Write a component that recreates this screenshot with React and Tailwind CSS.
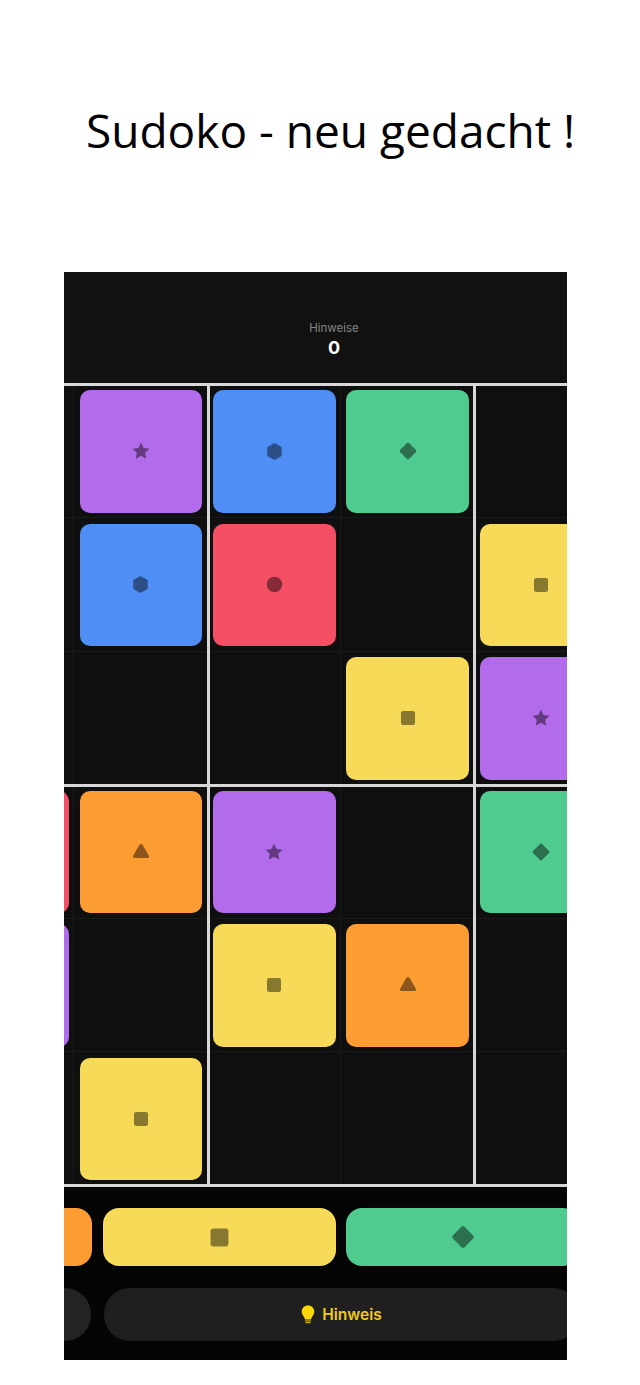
const COLORS = {
  purple: "bg-[#b26bea]",
  blue: "bg-[#4f8ef5]",
  green: "bg-[#4fcb8f]",
  red: "bg-[#f54f66]",
  yellow: "bg-[#f6da58]",
  orange: "bg-[#fc9d33]",
};

const ICON_FOR = {
  purple: "star",
  blue: "hexagon",
  green: "diamond",
  red: "circle",
  yellow: "square",
  orange: "triangle",
};

const ICON_SIZE = { star: 20, hexagon: 19, diamond: 20, circle: 19, square: 18, triangle: 20 };

const BOARD = [
  [null, "purple", "blue", "green", null],
  [null, "blue", "red", null, "yellow"],
  [null, null, null, "yellow", "purple"],
  ["red", "orange", "purple", null, "green"],
  ["purple", null, "yellow", "orange", null],
  [null, "yellow", null, null, null],
];

function Shape({ name, size = 20 }) {
  return (
    <svg width={size} height={size} viewBox="0 0 20 20" fill="#000" fillOpacity="0.45" className="block">
      {name === "star" && (
        <path d="M10 1.6l2.5 5.5 6 .7-4.4 4 1.2 5.9-5.3-3-5.3 3 1.2-5.9-4.4-4 6-.7z" />
      )}
      {name === "hexagon" && (
        <path d="M9 1.6a2 2 0 0 1 2 0l5.600 3.200a2 2 0 0 1 1 1.700v7a2 2 0 0 1-1 1.700L11 18.400a2 2 0 0 1-2 0l-5.600-3.200a2 2 0 0 1-1-1.700v-7a2 2 0 0 1 1-1.700z" />
      )}
      {name === "diamond" && (
        <path d="M8.800 2.200a1.700 1.700 0 0 1 2.400 0l6.600 6.600a1.700 1.700 0 0 1 0 2.400l-6.600 6.600a1.700 1.700 0 0 1-2.400 0l-6.600-6.600a1.700 1.700 0 0 1 0-2.400z" />
      )}
      {name === "circle" && <circle cx="10" cy="10" r="8.200" />}
      {name === "square" && <rect x="2.200" y="2.200" width="15.600" height="15.600" rx="2.500" />}
      {name === "triangle" && (
        <path d="M8.500 2.800a1.800 1.800 0 0 1 3 0l6.400 11a1.500 1.500 0 0 1-1.300 2.300H3.400a1.500 1.500 0 0 1-1.300-2.300z" />
      )}
    </svg>
  );
}

function Bulb() {
  return (
    <svg width="14" height="20" viewBox="0 0 14 20" className="block">
      <path
        d="M7 0.500C3.300 0.500 0.700 3.200 0.700 6.500c0 2.600 1.500 4 2.300 5.400.500.900.800 1.700.900 2.600h6.200c.100-.900.400-1.700.900-2.600.800-1.400 2.300-2.800 2.300-5.400C13.300 3.200 10.700.500 7 .500z"
        fill="#ffd60a"
      />
      <rect x="3.900" y="15.200" width="6.200" height="1.300" rx="0.600" fill="#c9a80c" />
      <rect x="4.300" y="17.100" width="5.400" height="1.200" rx="0.600" fill="#c9a80c" />
    </svg>
  );
}

function Cell({ color }) {
  return (
    <div className="flex items-center justify-center shadow-[inset_-1px_-1px_0_#1a1a1a]">
      {color && (
        <div className={`w-[122.500px] h-[122.500px] rounded-[10px] flex items-center justify-center ${COLORS[color]}`}>
          <Shape name={ICON_FOR[color]} size={ICON_SIZE[ICON_FOR[color]]} />
        </div>
      )}
    </div>
  );
}

export default function App() {
  return (
    <div className="bg-white h-[1385px] w-[640px] overflow-hidden">
      <div className="h-[272px] pl-[86px] pt-[98px]">
        <h1 className="text-[46px] leading-[64px] text-black whitespace-nowrap font-['Open_Sans',sans-serif]">
          Sudoko - neu gedacht !
        </h1>
      </div>

      <div className="ml-16 w-[503px] h-[1088px] overflow-hidden bg-[#050505] font-['Inter',sans-serif]">
        <div className="h-[112.500px] w-[540px] bg-[#111111] flex flex-col items-center justify-end pb-[23.500px]">
          <span className="text-[11.500px] leading-[14px] text-[#858585]">Hinweise</span>
          <span className="text-[18px] leading-[26px] font-bold text-white">0</span>
        </div>

        <div className="relative -ml-[123px] w-[666.650px] grid grid-cols-[repeat(5,133.330px)] auto-rows-[133.500px] bg-[#0f0f0f]">
          {BOARD.map((cells, row) =>
            cells.map((color, col) => <Cell key={`${row}-${col}`} color={color} />)
          )}
          {/* box dividers lie over the cells */}
          <div className="absolute left-0 right-0 top-[-2px] h-[3px] bg-[#d8d8d8]" />
          <div className="absolute left-0 right-0 top-[399px] h-[3px] bg-[#d8d8d8]" />
          <div className="absolute left-0 right-0 top-[799px] h-[3px] bg-[#d8d8d8]" />
          <div className="absolute top-[-2px] bottom-[-1px] left-[266px] w-[3px] bg-[#d8d8d8]" />
          <div className="absolute top-[-2px] bottom-[-1px] left-[532px] w-[3px] bg-[#d8d8d8]" />
        </div>

        <div className="-ml-[141px] mt-[22.500px] flex gap-[10.500px]">
          <div className="w-[169px] shrink-0 h-[58px] rounded-2xl bg-[#fc9d33]" />
          <div className="w-[233px] shrink-0 h-[58px] rounded-2xl bg-[#f6da58] flex items-center justify-center">
            <Shape name="square" size={23} />
          </div>
          <div className="w-[233px] shrink-0 h-[58px] rounded-2xl bg-[#4fcb8f] flex items-center justify-center">
            <Shape name="diamond" size={26} />
          </div>
        </div>

        <div className="-ml-[141px] mt-[22px] flex gap-[13px]">
          <div className="w-[168px] shrink-0 h-[53px] rounded-[26px] bg-[#232323]" />
          <div className="w-[475px] shrink-0 h-[53px] rounded-[26px] bg-[#1f1f1f] flex items-center justify-center gap-[7px] pt-px">
            <Bulb />
            <span className="text-[15.500px] font-semibold text-[#f2cc15]">Hinweis</span>
          </div>
        </div>
      </div>
    </div>
  );
}
